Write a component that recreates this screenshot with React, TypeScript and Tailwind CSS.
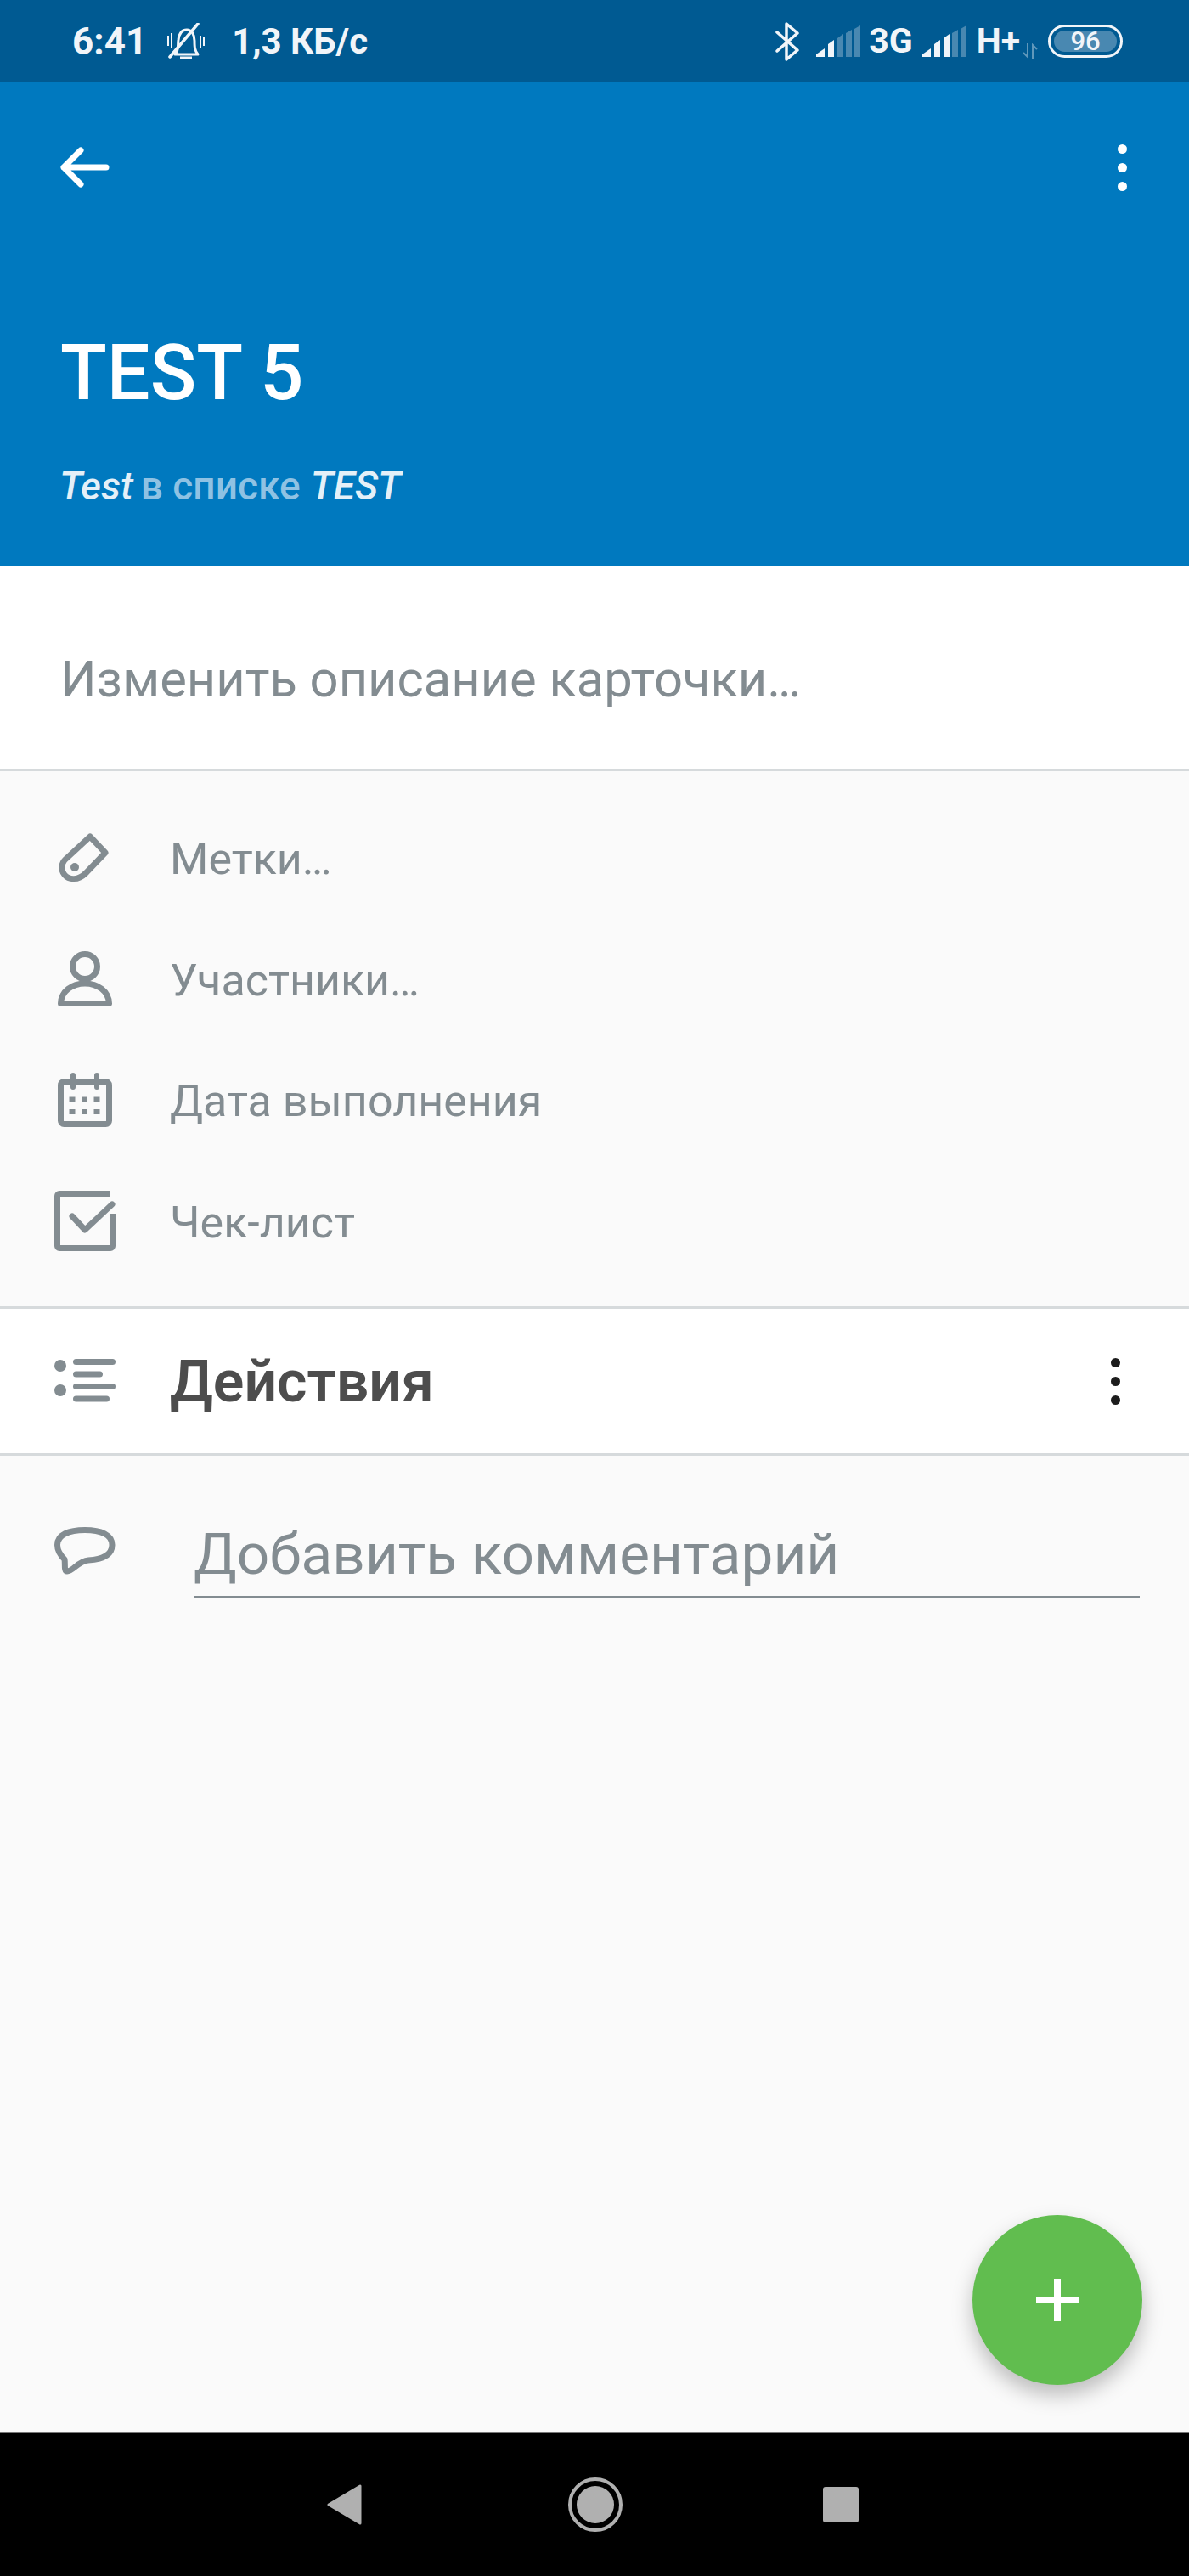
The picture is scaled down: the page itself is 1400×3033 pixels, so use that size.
import type { ReactNode } from "react"

const gray = "#838c91"

function SignalBars({ active }: { active: number }) {
  const bars = [
    "M0 37 V34 L10 27 V37 Z",
    "M14 37 V22 L21 17 V37 Z",
    "M25 37 V15 L32 10 V37 Z",
    "M35 37 V9 L42 5 V37 Z",
    "M45 37 V4 L52 0 V37 Z",
  ]
  return (
    <svg width="52" height="37" viewBox="0 0 52 37">
      {bars.map((d, i) => (
        <path key={d} d={d} fill="#f1f5f9" opacity={i < active ? 1 : 0.3} />
      ))}
    </svg>
  )
}

function DetailRow({ icon, label }: { icon: ReactNode; label: string }) {
  return (
    <div className="flex h-[142.5px] items-center">
      <div className="flex w-[200px] shrink-0 justify-center pb-[5px]">{icon}</div>
      <span className="text-[52px] text-[#838c91]">{label}</span>
    </div>
  )
}

function MoreDots({ className }: { className: string }) {
  return (
    <div className={`flex flex-col gap-[11px] ${className}`}>
      <span className="h-[11px] w-[11px] rounded-full bg-current" />
      <span className="h-[11px] w-[11px] rounded-full bg-current" />
      <span className="h-[11px] w-[11px] rounded-full bg-current" />
    </div>
  )
}

export default function App() {
  return (
    <div className="relative flex h-[3033px] w-full flex-col overflow-hidden bg-[#fafafa] font-['Roboto',sans-serif]">
      {/* Status bar */}
      <div className="flex h-[97px] shrink-0 items-center bg-[#005a92] pl-[85px] pr-[78px] text-[#f1f5f9]">
        <span className="text-[44px] font-bold leading-none">6:41</span>
        <svg className="ml-[23px]" width="46" height="44" viewBox="0 0 46 44" fill="none" stroke="#f1f5f9">
          <path d="M10 37 C15 32 13 26 14 20 C15 12 19 8 24 8 C30 8 33 14 33 21 C33 28 33 32 37 37 Z" strokeWidth="3" strokeLinejoin="round" />
          <path d="M4 40 L37 1" strokeWidth="3.5" strokeLinecap="round" />
          <path d="M2 15 V27 M6 12 V30 M40 15 V30 M44 17 V27" strokeWidth="2" />
          <path d="M16 41 H30" strokeWidth="3" />
        </svg>
        <span className="ml-[31px] text-[42px] font-bold leading-none">1,3 КБ/с</span>
        <div className="ml-auto flex items-center">
          <svg width="28" height="46" viewBox="0 0 28 46" fill="none" stroke="#f1f5f9" strokeWidth="3.5" strokeLinejoin="round" strokeLinecap="round">
            <path d="M2 12 L26 33 L13 44 V2 L26 13 L2 34" />
          </svg>
          <div className="ml-[20px]">
            <SignalBars active={2} />
          </div>
          <span className="ml-[10px] text-[41px] font-bold leading-none">3G</span>
          <div className="ml-[11px]">
            <SignalBars active={3} />
          </div>
          <span className="ml-[12px] text-[41px] font-bold leading-none">H+</span>
          <svg className="ml-[3px] mt-[22px]" width="18" height="18" viewBox="0 0 18 18" fill="none" stroke="#f1f5f9" strokeWidth="2" opacity="0.4">
            <path d="M6 0 V16 L1 11 M12 18 V2 L17 7" />
          </svg>
          <div className="ml-[12px] flex h-[39px] w-[88px] items-center rounded-full border-[3px] border-[#f1f5f9] p-[4px]">
            <div className="flex h-full w-full items-center justify-center rounded-full bg-[#f1f5f9]/30 text-[31px] font-medium leading-none">96</div>
          </div>
        </div>
      </div>

      {/* Card header */}
      <div className="flex h-[569px] shrink-0 flex-col bg-[#0079bf] pl-[71px] pr-[73px] text-white">
        <div className="flex h-[200px] shrink-0 items-center justify-between">
          <svg width="58" height="48" viewBox="0 0 58 48" fill="none" stroke="#fff" strokeWidth="7" strokeLinecap="round" strokeLinejoin="round">
            <path d="M24 4 L4 24 L24 44 M4 24 H54" />
          </svg>
          <MoreDots className="text-white" />
        </div>
        <h1 className="mt-[83px] text-[90px] font-medium leading-[120px]">TEST 5</h1>
        <p className="-ml-px mt-[42px] flex text-[46px] font-medium leading-[60px]">
          <span className="italic text-[#e4f0f8]">Test</span>
          <span className="ml-[9px] text-[#8fc2e3]">в списке</span>
          <span className="ml-[12px] italic text-[#e4f0f8]">TEST</span>
        </p>
      </div>

      {/* Description */}
      <div className="flex h-[242px] shrink-0 items-center border-b-[3px] border-[#d6dadc] bg-white pl-[71px] pt-[30px]">
        <span className="text-[59.700px] text-[#838c91]">Изменить описание карточки…</span>
      </div>

      {/* Details */}
      <div className="flex h-[633px] shrink-0 flex-col justify-center border-b-[3px] border-[#d6dadc] pt-[6px]">
        <DetailRow
          label="Метки…"
          icon={
            <svg width="60" height="59" viewBox="0 0 60 59" fill="none" stroke={gray} strokeWidth="7" strokeLinejoin="round">
              <path d="M36 5 L54 24 L31 48 C22 57 11 56 6 50 C1 44 2 35 9 30 Z" />
              <circle cx="18" cy="41" r="5" fill={gray} stroke="none" />
            </svg>
          }
        />
        <DetailRow
          label="Участники…"
          icon={
            <svg width="64" height="65" viewBox="0 0 64 65" fill="none" stroke={gray} strokeWidth="7" strokeLinejoin="round">
              <circle cx="32" cy="18" r="14.5" />
              <path d="M3.5 61.5 C4 47 17 38 32 38 C47 38 60 47 60.5 61.5 Z" />
            </svg>
          }
        />
        <DetailRow
          label="Дата выполнения"
          icon={
            <svg width="64" height="64" viewBox="0 0 64 64" fill="none" stroke={gray} strokeWidth="7">
              <rect x="3.5" y="10.500" width="57" height="50" rx="4" />
              <path d="M18 3 V17 M46 3 V17" strokeLinecap="round" strokeWidth="6" />
              <path d="M13.500 31.500 H50 M13.500 46 H50" strokeWidth="6" strokeDasharray="7 7.5" />
            </svg>
          }
        />
        <DetailRow
          label="Чек-лист"
          icon={
            <svg width="72" height="71" viewBox="0 0 72 71" fill="none" stroke={gray} strokeWidth="7">
              <path d="M65 3.5 H6 A2.5 2.5 0 0 0 3.5 6 V65 A2.5 2.5 0 0 0 6 67.5 H66 A2.5 2.5 0 0 0 68.5 65 V27" />
              <path d="M21 30 L36 46 L68 16" strokeLinecap="round" strokeLinejoin="round" />
            </svg>
          }
        />
      </div>

      {/* Activity header */}
      <div className="flex h-[173px] shrink-0 items-center border-b-[3px] border-[#d6dadc] bg-white pr-[81px]">
        <div className="flex w-[200px] shrink-0 pl-[64px]">
          <svg width="72" height="52" viewBox="0 0 72 52" fill={gray}>
            <circle cx="7" cy="8" r="7" />
            <circle cx="7" cy="37" r="7" />
            <rect x="22" y="0" width="50" height="7" rx="3.5" />
            <rect x="22" y="14.500" width="35" height="7" rx="3.500" />
            <rect x="22" y="29" width="50" height="7" rx="3.5" />
            <rect x="22" y="43.500" width="43" height="7" rx="3.500" />
          </svg>
        </div>
        <h2 className="flex-1 pt-[2px] text-[68px] font-semibold text-[#4d4d4d]">Действия</h2>
        <MoreDots className="text-[#1c1c1c]" />
      </div>

      {/* Comment field */}
      <div className="flex items-start pl-[64px] pr-[58px] pt-[84px]">
        <svg width="72" height="56" viewBox="0 0 72 56" fill="none" stroke={gray} strokeWidth="7" strokeLinejoin="round">
          <path d="M36 3.5 C55 3.500 68 9 68 21 C68 33 56 38 40 39 C28 40 22 52 15 52 C11 52 13 43 12 38 C7 33 3.500 28 3.500 21 C3.500 9 17 3.500 36 3.500 Z" />
        </svg>
        <div className="ml-[92px] flex h-[92px] flex-1 -translate-y-[8px] items-center border-b-[3px] border-[#838c91] pb-[10px] text-[67.500px] leading-none text-[#838c91]">
          Добавить комментарий
        </div>
      </div>

      {/* FAB */}
      <button className="absolute left-[1145px] top-[2608px] flex h-[200px] w-[200px] items-center justify-center rounded-full bg-[#61bd4f] shadow-[0_12px_24px_rgba(0,0,0,0.25)]">
        <svg width="50" height="50" viewBox="0 0 50 50" fill="#fff">
          <rect x="21" width="8" height="50" />
          <rect y="21" width="50" height="8" />
        </svg>
      </button>

      {/* Navigation bar */}
      <div className="mt-auto flex h-[169px] shrink-0 items-center border-t border-[#777] bg-black pl-[385px]">
        <svg width="41" height="48" viewBox="0 0 41 48" fill="#b0b0b0" stroke="#b0b0b0" strokeWidth="3" strokeLinejoin="round">
          <path d="M2 24 L39 2 V46 Z" />
        </svg>
        <div className="ml-[243px] flex h-[64px] w-[64px] items-center justify-center rounded-full border-[4px] border-[#b0b0b0]">
          <div className="h-[44px] w-[44px] rounded-full bg-[#b0b0b0]" />
        </div>
        <div className="ml-[236px] h-[42px] w-[42px] rounded-[3px] bg-[#b0b0b0]" />
      </div>
    </div>
  )
}
